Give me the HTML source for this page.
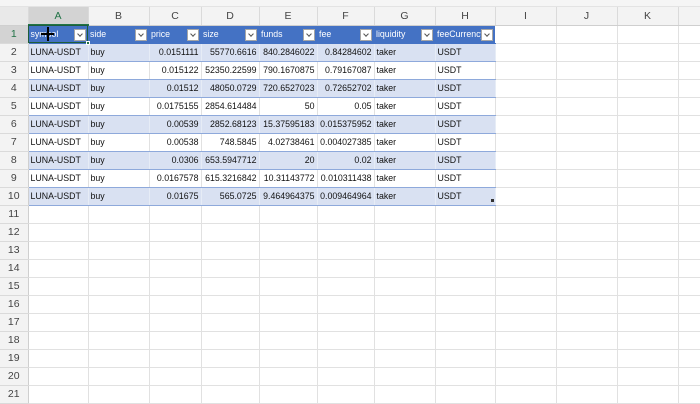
<!DOCTYPE html>
<html><head><meta charset="utf-8"><style>
*{margin:0;padding:0;box-sizing:border-box}
body{width:700px;height:400px;overflow:hidden;background:#fff;font-family:"Liberation Sans",Arial,sans-serif;position:relative}
.top{position:absolute;left:0;top:0;width:700px;height:7px;background:#f5f5f5;border-bottom:1px solid #e3e3e3}
table{position:absolute;left:0;top:7px;width:700px;border-collapse:collapse;table-layout:fixed}
td{height:18px;border-right:1px solid #e1e1e1;border-bottom:1px solid #e1e1e1;font-size:8.8px;color:#111;padding:0 2px;white-space:nowrap;overflow:hidden;vertical-align:middle}
tr.ch td{height:18px;background:#f3f3f3;color:#444;text-align:center;font-size:10.5px;border-right:1px solid #dadada;border-bottom:1px solid #cfcfcf}
td.rh{background:#f3f3f3;color:#444;text-align:center;font-size:10.5px;border-right:1px solid #cfcfcf;border-bottom:1px solid #dadada}
td.sel{background:#d3d3d3!important;color:#217346!important}
tr.h td.t{background:#4472c4;color:#fff;border-right:none;border-bottom:1px solid #4472c4;position:relative}
tr.b td.t{background:#d9e1f2;border-bottom:1px solid #8ea9db;border-right:1px solid #e6ecf6}
tr.w td.t{background:#fff;border-bottom:1px solid #8ea9db}
td.r{text-align:right}
.fb{position:absolute;right:2px;top:3px;width:12px;height:12px;background:#fff;border:1px solid #a6a6a6}
.fb:after{content:"";position:absolute;left:3px;top:2px;width:3px;height:3px;border-right:1px solid #555;border-bottom:1px solid #555;transform:rotate(45deg)}
</style></head><body>
<div class="top"></div>
<table>
<colgroup><col style="width:28px"><col style="width:60px"><col style="width:61px"><col style="width:52px"><col style="width:58px"><col style="width:58px"><col style="width:57px"><col style="width:61px"><col style="width:60px"><col style="width:61px"><col style="width:61px"><col style="width:61px"><col style="width:22px"></colgroup>
<tr class="ch"><td style="background:#e9e9e9"></td><td class="sel" style="border-bottom:2px solid #217346">A</td><td>B</td><td>C</td><td>D</td><td>E</td><td>F</td><td>G</td><td>H</td><td>I</td><td>J</td><td>K</td><td></td></tr>
<tr class="h"><td class="rh sel">1</td><td class="t" style="outline:1px solid #1e5e3a;outline-offset:-1px">symbol<span class="fb"></span></td><td class="t">side<span class="fb"></span></td><td class="t">price<span class="fb"></span></td><td class="t">size<span class="fb"></span></td><td class="t">funds<span class="fb"></span></td><td class="t">fee<span class="fb"></span></td><td class="t">liquidity<span class="fb"></span></td><td class="t">feeCurrency<span class="fb"></span></td><td></td><td></td><td></td><td></td></tr>
<tr class="b"><td class="rh">2</td><td class="t">LUNA-USDT</td><td class="t">buy</td><td class="t r">0.0151111</td><td class="t r">55770.6616</td><td class="t r">840.2846022</td><td class="t r">0.84284602</td><td class="t">taker</td><td class="t">USDT</td><td></td><td></td><td></td><td></td></tr>
<tr class="w"><td class="rh">3</td><td class="t">LUNA-USDT</td><td class="t">buy</td><td class="t r">0.015122</td><td class="t r">52350.22599</td><td class="t r">790.1670875</td><td class="t r">0.79167087</td><td class="t">taker</td><td class="t">USDT</td><td></td><td></td><td></td><td></td></tr>
<tr class="b"><td class="rh">4</td><td class="t">LUNA-USDT</td><td class="t">buy</td><td class="t r">0.01512</td><td class="t r">48050.0729</td><td class="t r">720.6527023</td><td class="t r">0.72652702</td><td class="t">taker</td><td class="t">USDT</td><td></td><td></td><td></td><td></td></tr>
<tr class="w"><td class="rh">5</td><td class="t">LUNA-USDT</td><td class="t">buy</td><td class="t r">0.0175155</td><td class="t r">2854.614484</td><td class="t r">50</td><td class="t r">0.05</td><td class="t">taker</td><td class="t">USDT</td><td></td><td></td><td></td><td></td></tr>
<tr class="b"><td class="rh">6</td><td class="t">LUNA-USDT</td><td class="t">buy</td><td class="t r">0.00539</td><td class="t r">2852.68123</td><td class="t r">15.37595183</td><td class="t r">0.015375952</td><td class="t">taker</td><td class="t">USDT</td><td></td><td></td><td></td><td></td></tr>
<tr class="w"><td class="rh">7</td><td class="t">LUNA-USDT</td><td class="t">buy</td><td class="t r">0.00538</td><td class="t r">748.5845</td><td class="t r">4.02738461</td><td class="t r">0.004027385</td><td class="t">taker</td><td class="t">USDT</td><td></td><td></td><td></td><td></td></tr>
<tr class="b"><td class="rh">8</td><td class="t">LUNA-USDT</td><td class="t">buy</td><td class="t r">0.0306</td><td class="t r">653.5947712</td><td class="t r">20</td><td class="t r">0.02</td><td class="t">taker</td><td class="t">USDT</td><td></td><td></td><td></td><td></td></tr>
<tr class="w"><td class="rh">9</td><td class="t">LUNA-USDT</td><td class="t">buy</td><td class="t r">0.0167578</td><td class="t r">615.3216842</td><td class="t r">10.31143772</td><td class="t r">0.010311438</td><td class="t">taker</td><td class="t">USDT</td><td></td><td></td><td></td><td></td></tr>
<tr class="b"><td class="rh">10</td><td class="t">LUNA-USDT</td><td class="t">buy</td><td class="t r">0.01675</td><td class="t r">565.0725</td><td class="t r">9.464964375</td><td class="t r">0.009464964</td><td class="t">taker</td><td class="t">USDT</td><td></td><td></td><td></td><td></td></tr>
<tr><td class="rh">11</td><td></td><td></td><td></td><td></td><td></td><td></td><td></td><td></td><td></td><td></td><td></td><td></td></tr>
<tr><td class="rh">12</td><td></td><td></td><td></td><td></td><td></td><td></td><td></td><td></td><td></td><td></td><td></td><td></td></tr>
<tr><td class="rh">13</td><td></td><td></td><td></td><td></td><td></td><td></td><td></td><td></td><td></td><td></td><td></td><td></td></tr>
<tr><td class="rh">14</td><td></td><td></td><td></td><td></td><td></td><td></td><td></td><td></td><td></td><td></td><td></td><td></td></tr>
<tr><td class="rh">15</td><td></td><td></td><td></td><td></td><td></td><td></td><td></td><td></td><td></td><td></td><td></td><td></td></tr>
<tr><td class="rh">16</td><td></td><td></td><td></td><td></td><td></td><td></td><td></td><td></td><td></td><td></td><td></td><td></td></tr>
<tr><td class="rh">17</td><td></td><td></td><td></td><td></td><td></td><td></td><td></td><td></td><td></td><td></td><td></td><td></td></tr>
<tr><td class="rh">18</td><td></td><td></td><td></td><td></td><td></td><td></td><td></td><td></td><td></td><td></td><td></td><td></td></tr>
<tr><td class="rh">19</td><td></td><td></td><td></td><td></td><td></td><td></td><td></td><td></td><td></td><td></td><td></td><td></td></tr>
<tr><td class="rh">20</td><td></td><td></td><td></td><td></td><td></td><td></td><td></td><td></td><td></td><td></td><td></td><td></td></tr>
<tr><td class="rh">21</td><td></td><td></td><td></td><td></td><td></td><td></td><td></td><td></td><td></td><td></td><td></td><td></td></tr>
</table>
<div style="position:absolute;left:47px;top:27px;width:1.5px;height:14px;background:#000"></div>
<div style="position:absolute;left:41px;top:33px;width:13px;height:1.5px;background:#000"></div>
<div style="position:absolute;left:86px;top:41px;width:4px;height:4px;background:#217346;border:1px solid #fff"></div>
<div style="position:absolute;left:491px;top:199px;width:3px;height:3px;background:#333"></div>
</body></html>
